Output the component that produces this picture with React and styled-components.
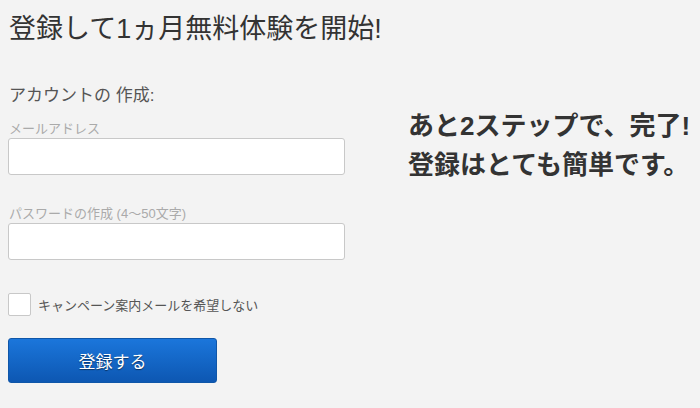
import styled, { createGlobalStyle } from "styled-components";

const GlobalStyle = createGlobalStyle`
    html, body {
        margin: 0;
        padding: 0;
        background: #f3f3f3;
        font-family: "Liberation Sans", "Noto Sans CJK JP", sans-serif;
    }
`

export default function App() {
    return (
        <Page>
            <GlobalStyle />
            <Title>登録して1ヵ月無料体験を開始!</Title>
            <Body>
                <Form>
                    <Heading>アカウントの 作成:</Heading>
                    <Label $top={12}>メールアドレス</Label>
                    <Input type="email" />
                    <Label $top={30}>パスワードの作成 (4〜50文字)</Label>
                    <Input type="password" />
                    <CheckRow>
                        <Check />
                        <span>キャンペーン案内メールを希望しない</span>
                    </CheckRow>
                    <Submit>登録する</Submit>
                </Form>
                <Side>
                    あと<b>2</b>ステップで、完了!<br />
                    登録はとても簡単です。
                </Side>
            </Body>
        </Page>
    )
}

const Page = styled.div`
    width: 700px;
    height: 408px;
    padding: 11px 0 0 8px;
    box-sizing: border-box;
    overflow: hidden;
`
const Title = styled.h1`
    margin: 0 0 0 1px;
    font-size: 27px;
    font-weight: normal;
    line-height: 37px;
    color: #333333;
`
const Body = styled.div`
    display: flex;
    margin-top: 36px;
`
const Form = styled.div`
    width: 337px;
    display: flex;
    flex-direction: column;
`
const Heading = styled.div`
    font-size: 17px;
    line-height: 24px;
    color: #555555;
    margin-left: 1px;
`
const Label = styled.div`
    margin-top: ${p => p.$top}px;
    font-size: 13px;
    line-height: 18px;
    color: #aaaaaa;
    margin-left: 1px;
`
const Input = styled.input`
    height: 37px;
    box-sizing: border-box;
    border: 1px solid #c8c8c8;
    border-radius: 3px;
    background: #ffffff;
    outline: none;
`
const CheckRow = styled.label`
    display: flex;
    align-items: center;
    gap: 7px;
    margin-top: 33px;
    font-size: 13px;
    color: #555555;
`
const Check = styled.span`
    width: 23px;
    height: 23px;
    box-sizing: border-box;
    border: 1px solid #c8c8c8;
    background: #ffffff;
    border-radius: 2px;
`
const Submit = styled.button`
    margin-top: 22px;
    width: 209px;
    height: 45px;
    border: 1px solid #0f56a8;
    border-radius: 3px;
    background: linear-gradient(#1b76db, #0d57b2);
    color: #ffffff;
    font-family: inherit;
    font-size: 17px;
    text-shadow: 0 1px 1px rgba(0, 0, 0, 0.5);
    cursor: pointer;
`
const Side = styled.div`
    margin: 23px 0 0 63px;
    font-size: 26px;
    font-weight: bold;
    line-height: 39px;
    color: #333333;
    white-space: nowrap;
    b {
        font-weight: bold;
    }
`
